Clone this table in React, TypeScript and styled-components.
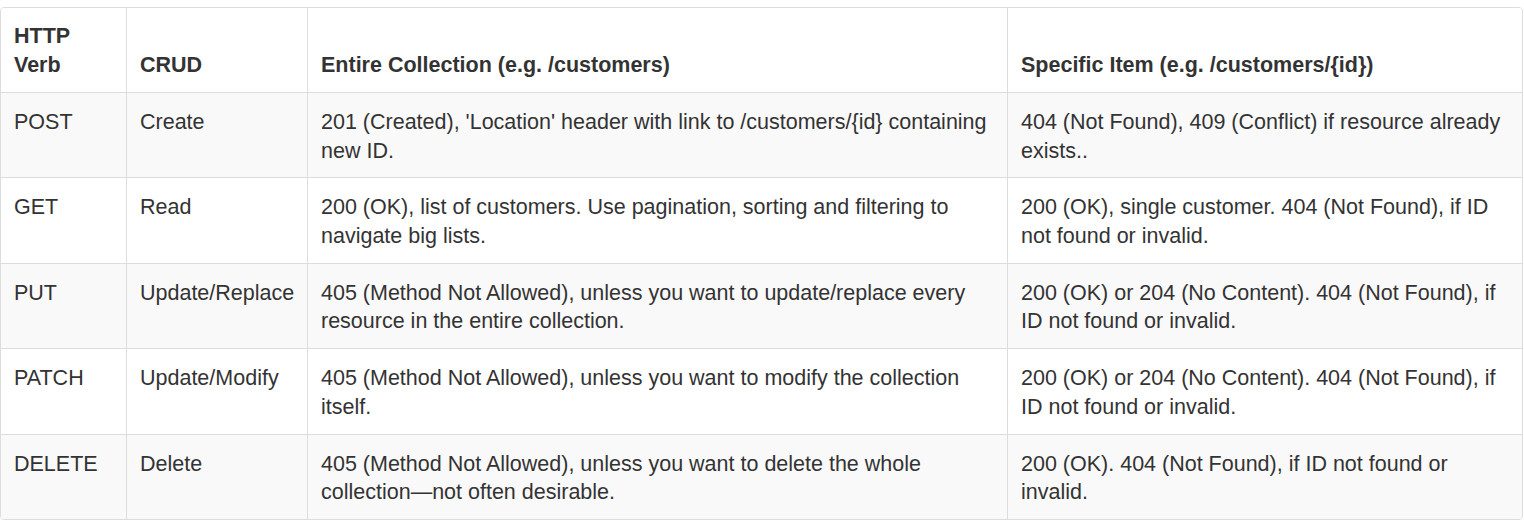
import React from 'react';
import styled, { createGlobalStyle } from 'styled-components';

const GlobalStyle = createGlobalStyle`
  body {
    margin: 0;
    padding-top: 7px;
    background: #fff;
    font-family: "Liberation Sans", Arial, Helvetica, sans-serif;
    color: #333;
  }
`;

type Row = {
  verb: string;
  crud: string;
  collection: string;
  item: string;
};

const rows: Row[] = [
  {
    verb: 'POST',
    crud: 'Create',
    collection: "201 (Created), 'Location' header with link to /customers/{id} containing new ID.",
    item: '404 (Not Found), 409 (Conflict) if resource already exists..',
  },
  {
    verb: 'GET',
    crud: 'Read',
    collection: '200 (OK), list of customers. Use pagination, sorting and filtering to navigate big lists.',
    item: '200 (OK), single customer. 404 (Not Found), if ID not found or invalid.',
  },
  {
    verb: 'PUT',
    crud: 'Update/Replace',
    collection: '405 (Method Not Allowed), unless you want to update/replace every resource in the entire collection.',
    item: '200 (OK) or 204 (No Content). 404 (Not Found), if ID not found or invalid.',
  },
  {
    verb: 'PATCH',
    crud: 'Update/Modify',
    collection: '405 (Method Not Allowed), unless you want to modify the collection itself.',
    item: '200 (OK) or 204 (No Content). 404 (Not Found), if ID not found or invalid.',
  },
  {
    verb: 'DELETE',
    crud: 'Delete',
    collection: '405 (Method Not Allowed), unless you want to delete the whole collection\u2014not often desirable.',
    item: '200 (OK). 404 (Not Found), if ID not found or invalid.',
  },
];

function App() {
  return (
    <>
      <GlobalStyle />
      <Table>
        <colgroup>
          <col style={{ width: 125 }} />
          <col style={{ width: 181 }} />
          <col style={{ width: 700 }} />
          <col />
        </colgroup>
        <thead>
          <tr>
            <HeadCell>HTTP Verb</HeadCell>
            <HeadCell>CRUD</HeadCell>
            <HeadCell>Entire Collection (e.g. /customers)</HeadCell>
            <HeadCell>Specific Item (e.g. /customers/{'{id}'})</HeadCell>
          </tr>
        </thead>
        <tbody>
          {rows.map((row, i) => (
            <BodyRow key={row.verb} $striped={i % 2 === 0}>
              <Cell>{row.verb}</Cell>
              <Cell>{row.crud}</Cell>
              <Cell>{row.collection}</Cell>
              <Cell>{row.item}</Cell>
            </BodyRow>
          ))}
        </tbody>
      </Table>
    </>
  );
}

const Table = styled.table`
  width: 1523px;
  table-layout: fixed;
  border-collapse: separate;
  border-spacing: 0;
  border: 1px solid #ddd;
  border-radius: 4px;
  overflow: hidden;
  font-size: 21.5px;
  line-height: 28.5px;
`;

const HeadCell = styled.th`
  text-align: left;
  vertical-align: bottom;
  font-weight: bold;
  padding: 14px 13px 13px;
  border-left: 1px solid #ddd;
  background: #fff;

  &:first-child {
    border-left: none;
  }
`;

const BodyRow = styled.tr<{ $striped: boolean }>`
  background: ${(p) => (p.$striped ? '#f9f9f9' : '#fff')};
`;

const Cell = styled.td`
  vertical-align: top;
  padding: 15px 13px 12.4px;
  border-left: 1px solid #ddd;
  border-top: 1px solid #ddd;

  &:first-child {
    border-left: none;
  }
`;

export default App;
